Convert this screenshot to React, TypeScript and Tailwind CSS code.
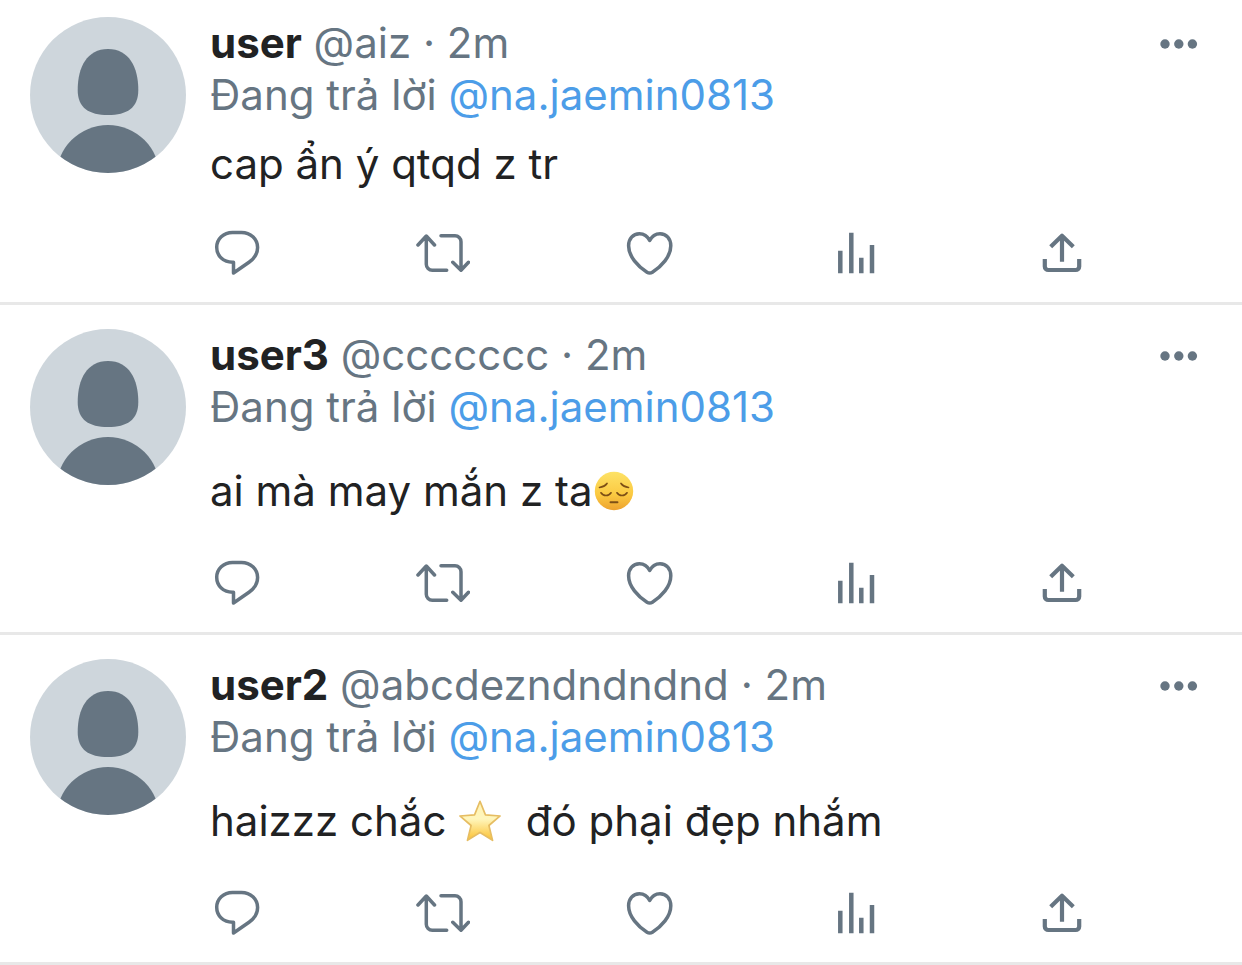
import type { ReactNode } from "react";

interface Tweet {
  name: string;
  handle: string;
  time: string;
  replyTo: string;
  body: ReactNode;
  compact?: boolean;
}

function SadFace() {
  return (
    <svg role="img" aria-label="pensive face" viewBox="0 0 40 40" className="inline-block size-10 align-[-5px] ml-0.5">
      <defs>
        <linearGradient id="face" x1="0" y1="0" x2="0" y2="1">
          <stop offset="0" stopColor="#fde266" />
          <stop offset="0.6" stopColor="#fbc941" />
          <stop offset="1" stopColor="#eda22f" />
        </linearGradient>
      </defs>
      <circle cx="20" cy="20" r="19.2" fill="url(#face)" />
      <g fill="none" stroke="#7d4f16" strokeWidth="1.7" strokeLinecap="round">
        <path d="M5.500 16.500c3.200-.4 5.800-1.700 7.500-4" />
        <path d="M34.500 16.500c-3.200-.4-5.800-1.700-7.500-4" />
        <path d="M7 21.800c2.200 3.600 7.800 3.600 10 0" />
        <path d="M23 21.800c2.200 3.600 7.800 3.600 10 0" />
        <path d="M16.500 31.200h7" strokeWidth="1.900" />
      </g>
    </svg>
  );
}

function Star() {
  return (
    <svg role="img" aria-label="star" viewBox="0 0 42 42" className="inline-block size-11 align-[-7px]">
      <defs>
        <linearGradient id="star" x1="0" y1="0" x2="0" y2="1">
          <stop offset="0" stopColor="#fff3b4" />
          <stop offset="0.45" stopColor="#fff6bc" />
          <stop offset="1" stopColor="#fbc02f" />
        </linearGradient>
      </defs>
      <path
        d="M21 2.200l5.200 12.900 14 1.100-10.700 9.100 3.500 14.200L21 31.900 9 39.500l3.500-14.200L1.800 16.200l14-1.100z"
        fill="url(#star)"
        stroke="#e6bd62"
        strokeWidth="1.600"
        strokeLinejoin="round"
      />
    </svg>
  );
}

const tweets: Tweet[] = [
  {
    name: "user",
    handle: "@aiz",
    time: "2m",
    replyTo: "@na.jaemin0813",
    body: "cap ẩn ý qtqd z tr",
    compact: true,
  },
  {
    name: "user3",
    handle: "@ccccccc",
    time: "2m",
    replyTo: "@na.jaemin0813",
    body: <>ai mà may mắn z ta<SadFace /></>,
  },
  {
    name: "user2",
    handle: "@abcdezndndndnd",
    time: "2m",
    replyTo: "@na.jaemin0813",
    body: <>haizzz chắc <Star />{" \u00a0"}đó phại đẹp nhắm</>,
  },
];

function Avatar() {
  return (
    <svg viewBox="0 0 156 156" aria-hidden="true" className="size-[156px] shrink-0 rounded-full bg-[#ced6dc]">
      <g fill="#667582">
        <path d="M78 32c21 0 30.300 18 30.300 41 0 18-11.300 25-30.300 25s-30.300-7-30.300-25c0-23 9.300-41 30.300-41z" />
        <circle cx="78" cy="159.600" r="51.600" />
      </g>
    </svg>
  );
}

const actions = [
  {
    label: "Reply",
    icon: (
      <path d="M22.500 3.400h9c9 0 16.100 6.600 16.100 15.100 0 6.200-3.200 11-8.600 14.700L23.500 44V33.200h-1c-9 0-15.800-6.200-15.800-14.900 0-8.300 6.800-14.900 15.800-14.900z" />
    ),
  },
  {
    label: "Retweet",
    icon: (
      <path
        d="M2 16l8.300-9 8.200 9M10.300 8v27.300a6 6 0 0 0 6 6h14.400M25 6.800h14a6 6 0 0 1 6 6V41M36.800 33.300l8.200 7.900 7.500-7.900"
        strokeLinecap="round"
      />
    ),
  },
  {
    label: "Like",
    icon: (
      <path d="M26.700 11.500C24.500 7.200 20.800 4.700 16.400 4.700 10 4.700 5.600 10 5.600 16.700c0 10.800 9.400 20.800 18.400 26.500q2.700 1.700 5.400 0c9-5.700 18.400-15.700 18.400-26.500C47.800 10 43.400 4.700 37 4.700c-4.400 0-8.100 2.500-10.300 6.800z" />
    ),
  },
  {
    label: "View activity",
    icon: <path d="M11.300 21.700v22.600M22.300 3.700v40.600M32.300 28.700v15.600M43 16v28.300" strokeWidth="4.500" />,
  },
  {
    label: "Share",
    icon: (
      <path d="M27 7v25.700M15.700 17.800L27 6.800l11.300 11M9.800 30v7.500a3.500 3.500 0 0 0 3.500 3.500h27.400a3.500 3.500 0 0 0 3.500-3.500V30" strokeWidth="4.200" />
    ),
  },
];

function TweetRow({ tweet }: { tweet: Tweet }) {
  return (
    <article className={`flex gap-6 border-b-[3px] border-[#e8e8e8] pl-[30px] pr-10 pb-[25px] ${tweet.compact ? "pt-[17px]" : "pt-6"}`}>
      <Avatar />
      <div className="min-w-0 flex-1">
        <div className="flex items-center justify-between">
          <p className="text-[#667582]">
            <span className="font-bold text-[#212223]">{tweet.name}</span> {tweet.handle} · {tweet.time}
          </p>
          <button aria-label="More">
            <svg viewBox="0 0 44 20" fill="#667582" className="h-5 w-11">
              <circle cx="7" cy="11" r="4.700" />
              <circle cx="20.800" cy="11" r="4.700" />
              <circle cx="34.400" cy="11" r="4.700" />
            </svg>
          </button>
        </div>
        <p className="text-[#667582]">
          Đang trả lời <a href="#" className="text-[#4c9de8]">{tweet.replyTo}</a>
        </p>
        <p className={`text-[#212223] ${tweet.compact ? "mt-[17px]" : "mt-8"}`}>{tweet.body}</p>
        <div className={`mr-[113px] flex justify-between ${tweet.compact ? "mt-[39px]" : "mt-[42px]"}`}>
          {actions.map((action) => (
            <button key={action.label} aria-label={action.label}>
              <svg
                viewBox="0 0 54 48"
                fill="none"
                stroke="#667582"
                strokeWidth="3.500"
                strokeLinejoin="round"
                className="h-12 w-[54px]"
              >
                {action.icon}
              </svg>
            </button>
          ))}
        </div>
      </div>
    </article>
  );
}

export default function App() {
  return (
    <main className="bg-white font-['Inter',sans-serif] text-[42px] leading-[52px]">
      {tweets.map((tweet) => (
        <TweetRow key={tweet.name} tweet={tweet} />
      ))}
    </main>
  );
}
